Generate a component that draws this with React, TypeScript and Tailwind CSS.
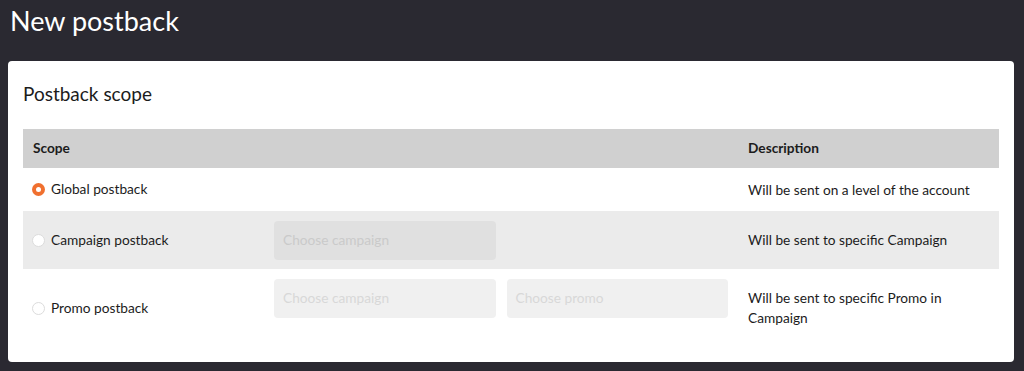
import React from 'react';

type Scope = {
  label: string;
  description: string;
  checked?: boolean;
  inputs: string[];
  shaded?: boolean;
};

const scopes: Scope[] = [
  { label: 'Global postback', description: 'Will be sent on a level of the account', checked: true, inputs: [] },
  { label: 'Campaign postback', description: 'Will be sent to specific Campaign', inputs: ['Choose campaign'], shaded: true },
  { label: 'Promo postback', description: 'Will be sent to specific Promo in Campaign', inputs: ['Choose campaign', 'Choose promo'] },
];

function Radio({ checked }: { checked?: boolean }) {
  if (checked) {
    return (
      <span className="flex h-[13px] w-[13px] shrink-0 items-center justify-center rounded-full bg-[#f0702f]">
        <span className="h-[5px] w-[5px] rounded-full bg-white" />
      </span>
    );
  }
  return <span className="h-[13px] w-[13px] shrink-0 rounded-full border border-[#dcdcdc] bg-white" />;
}

export default function App() {
  return (
    <div className="h-[371px] w-full overflow-hidden bg-[#2a2931] px-[8px] font-['Lato',sans-serif] text-[#1c1c1c]">
      {/* Page title */}
      <div className="h-[61px] pl-[2px] pt-[1px]">
        <h1 className="text-[27px] leading-[40px] font-normal text-white">New postback</h1>
      </div>

      {/* Card */}
      <div className="w-[1006px] rounded-[4px] bg-white p-[15px]">
        <h2 className="mb-[21px] mt-[4px] text-[19px] leading-[28px] font-normal">Postback scope</h2>

        <div className="text-[13.7px]">
          {/* Header */}
          <div className="flex h-[39px] items-center bg-[#d0d0d0] font-bold">
            <div className="w-[241px] pl-[10px]">Scope</div>
            <div className="w-[474px]" />
            <div className="pl-[10px]">Description</div>
          </div>

          {scopes.map((s, i) => (
            <div
              key={s.label}
              className={`flex ${s.shaded ? 'bg-[#ebebeb]' : 'bg-white'} ${
                i === 0 ? 'h-[43px]' : i === 1 ? 'h-[58px]' : 'h-[78px]'
              }`}
            >
              <div className="flex w-[241px] items-center gap-[6px] pl-[9px]">
                <Radio checked={s.checked} />
                <span>{s.label}</span>
              </div>
              <div className={`flex w-[474px] gap-[11px] px-[10px] ${i === 2 ? 'pt-[10px]' : 'items-center'}`}>
                {s.inputs.map((p) => (
                  <div
                    key={p}
                    className={`flex h-[39px] w-[222px] items-center rounded-[4px] pl-[9px] ${
                      s.shaded ? 'bg-[#e0e0e0] text-[#cacaca]' : 'bg-[#f0f0f0] text-[#d8d8d8]'
                    }`}
                  >
                    {p}
                  </div>
                ))}
              </div>
              <div className="flex w-[261px] items-center px-[10px] leading-[20px]">{s.description}</div>
            </div>
          ))}
        </div>
      </div>
    </div>
  );
}
